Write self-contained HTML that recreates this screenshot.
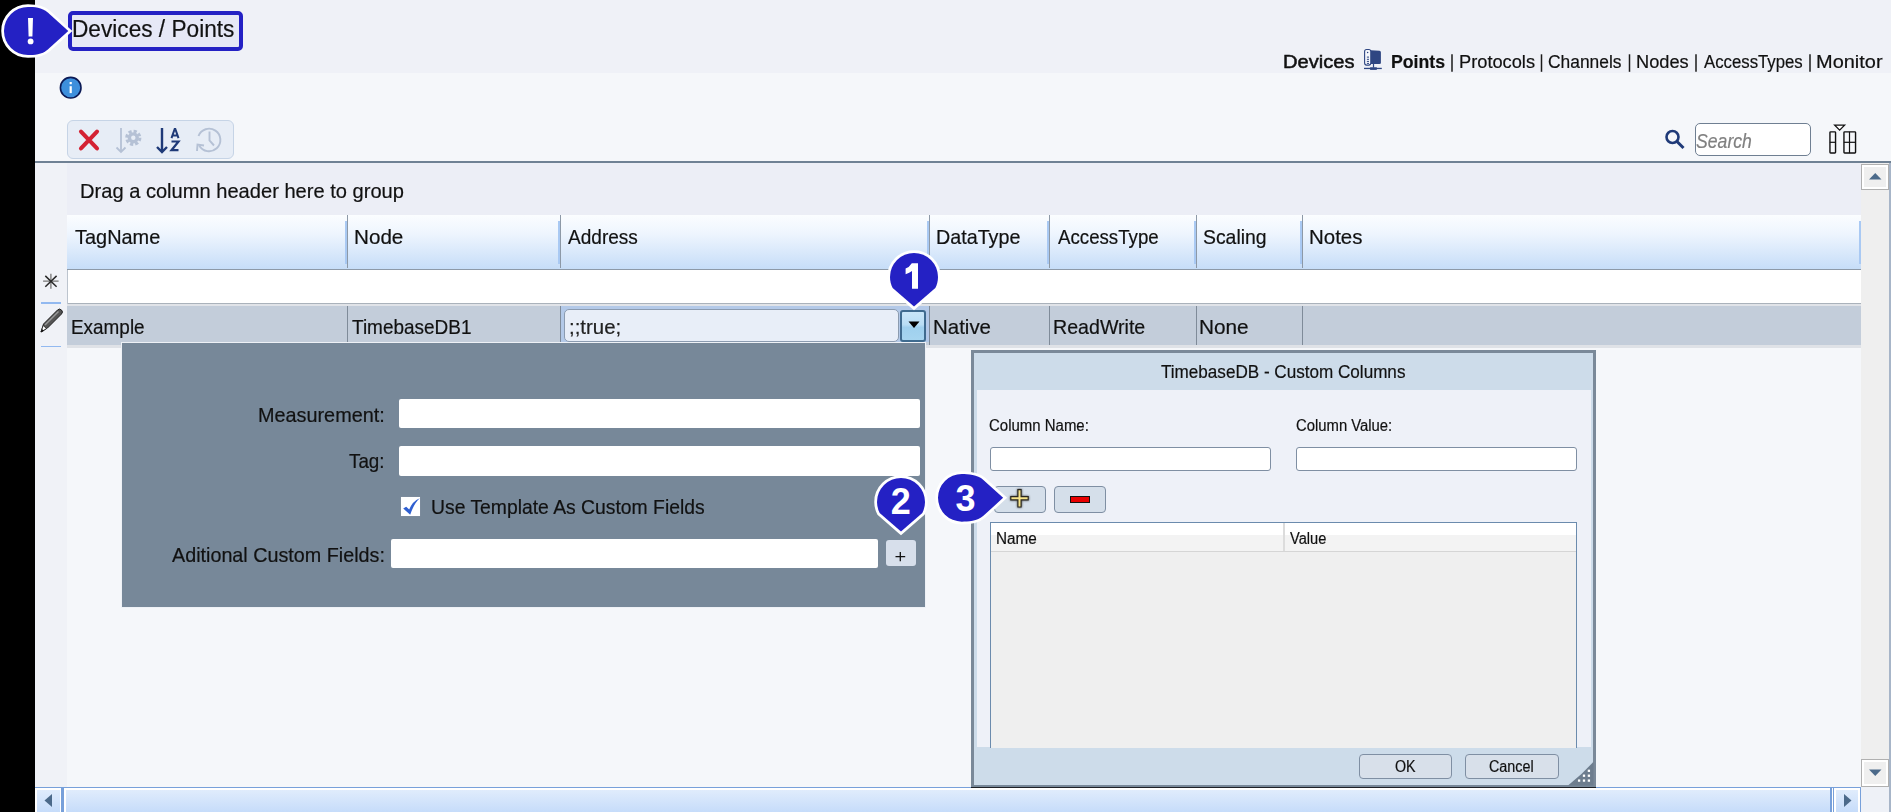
<!DOCTYPE html><html><head><meta charset="utf-8"><style>
html,body{margin:0;padding:0;}
body{width:1891px;height:812px;overflow:hidden;position:relative;background:#f5f7fa;font-family:"Liberation Sans",sans-serif;}
.t{position:absolute;white-space:nowrap;-webkit-text-stroke:0.2px currentColor;}
svg{overflow:visible;}
</style></head><body>
<div style="position:absolute;left:0px;top:0px;width:1891px;height:73px;background:#eff1f7"></div>
<div style="position:absolute;left:0px;top:0px;width:35px;height:812px;background:#000"></div>
<div style="position:absolute;left:68px;top:11px;width:175px;height:40px;box-sizing:border-box;border:4px solid #2421c4;border-radius:5px;background:#e6e8f6"></div>
<div class="t" style="left:72.29px;top:18.33px;font-size:23px;line-height:23px;font-weight:normal;font-style:normal;color:#111;transform:scaleX(0.9848);transform-origin:0 0;">Devices / Points</div>
<div class="t" style="left:1282.89px;top:52.70px;font-size:18.9px;line-height:18.9px;font-weight:normal;font-style:normal;color:#111;transform:scaleX(1.0644);transform-origin:0 0;-webkit-text-stroke:0.5px #111;">Devices</div>
<div class="t" style="left:1390.65px;top:52.70px;font-size:18.9px;line-height:18.9px;font-weight:bold;font-style:normal;color:#111;transform:scaleX(0.9362);transform-origin:0 0;">Points</div>
<div class="t" style="left:1458.54px;top:52.70px;font-size:18.9px;line-height:18.9px;font-weight:normal;font-style:normal;color:#111;transform:scaleX(0.9656);transform-origin:0 0;">Protocols</div>
<div class="t" style="left:1548.13px;top:52.70px;font-size:18.9px;line-height:18.9px;font-weight:normal;font-style:normal;color:#111;transform:scaleX(0.9202);transform-origin:0 0;">Channels</div>
<div class="t" style="left:1636.34px;top:52.70px;font-size:18.9px;line-height:18.9px;font-weight:normal;font-style:normal;color:#111;transform:scaleX(0.9648);transform-origin:0 0;">Nodes</div>
<div class="t" style="left:1704.30px;top:52.70px;font-size:18.9px;line-height:18.9px;font-weight:normal;font-style:normal;color:#111;transform:scaleX(0.8874);transform-origin:0 0;">AccessTypes</div>
<div class="t" style="left:1816.40px;top:52.70px;font-size:18.9px;line-height:18.9px;font-weight:normal;font-style:normal;color:#111;transform:scaleX(1.0566);transform-origin:0 0;">Monitor</div>
<svg style="position:absolute;left:1440px;top:50px;" width="380" height="26" viewBox="0 0 380 26"><line x1="12" y1="4.3" x2="12" y2="21.8" stroke="#1a1a1a" stroke-width="1.5"/><line x1="101.5" y1="4.3" x2="101.5" y2="21.8" stroke="#1a1a1a" stroke-width="1.5"/><line x1="189.5" y1="4.3" x2="189.5" y2="21.8" stroke="#1a1a1a" stroke-width="1.5"/><line x1="256" y1="4.3" x2="256" y2="21.8" stroke="#1a1a1a" stroke-width="1.5"/><line x1="370" y1="4.3" x2="370" y2="21.8" stroke="#1a1a1a" stroke-width="1.5"/></svg>
<svg style="position:absolute;left:1355px;top:44px;" width="30" height="30" viewBox="0 0 30 30"><rect x="9.6" y="5.5" width="6.2" height="15.6" rx="2" fill="#f4f6fb" stroke="#2e4682" stroke-width="1.1"/><path d="M15.8 6.2 L24.5 6.8 Q25.9 7 25.9 8.4 L25.9 19 Q25.9 20.1 24.5 20.1 L15.8 20.1 Z" fill="#2e4682"/><circle cx="12.6" cy="8.5" r="0.75" fill="#2e4682"/><g stroke="#2e4682" stroke-width="1"><line x1="11.9" y1="13.1" x2="14" y2="13.1"/><line x1="11.9" y1="15.3" x2="14" y2="15.3"/><line x1="11.9" y1="17.4" x2="14" y2="17.4"/><line x1="11.9" y1="19.4" x2="14" y2="19.4"/></g><rect x="17.9" y="20" width="1.2" height="3.6" fill="#2e4682"/><rect x="9" y="23.8" width="17.8" height="1.3" fill="#2e4682"/><rect x="15.1" y="23.3" width="6.7" height="2.6" fill="#2e4682"/></svg>
<svg style="position:absolute;left:59px;top:76px;" width="24" height="24" viewBox="0 0 24 24"><circle cx="11.7" cy="11.7" r="10.3" fill="#3d8fdc" stroke="#0b1a55" stroke-width="1.6"/><rect x="10.6" y="10.2" width="2.2" height="6.9" fill="#fff"/><rect x="10.6" y="6" width="2.2" height="2.2" fill="#fff"/></svg>
<div style="position:absolute;left:67px;top:120px;width:167px;height:39px;box-sizing:border-box;border:1px solid #c6d4e6;border-radius:6px;background:#e7edf6"></div>
<svg style="position:absolute;left:75px;top:125px;" width="30" height="30" viewBox="0 0 30 30"><path d="M6 6.6 L22 23.4 M22 6.6 L6 23.4" stroke="#d42233" stroke-width="4.1" stroke-linecap="round"/></svg>
<svg style="position:absolute;left:113px;top:125px;" width="30" height="30" viewBox="0 0 30 30"><path d="M8 3 L8 27 M3.5 22.5 L8 27 L12.5 22.5" stroke="#b5c1d5" stroke-width="1.8" fill="none"/><circle cx="20.3" cy="12.8" r="6.6" fill="none" stroke="#b5c1d5" stroke-width="3" stroke-dasharray="3.2 2"/><circle cx="20.3" cy="12.8" r="5.6" fill="#b5c1d5"/><circle cx="20.3" cy="12.8" r="2.2" fill="#e7edf6"/></svg>
<svg style="position:absolute;left:153px;top:125px;" width="30" height="30" viewBox="0 0 30 30"><path d="M9 3 L9 27 M4 22 L9 27 L14 22" stroke="#1f3a78" stroke-width="2.4" fill="none"/><path d="M18.5 13.2 L21.7 4 L22.3 4 L25.5 13.2 M19.6 10.6 L24.4 10.6" stroke="#1f3a78" stroke-width="2" fill="none"/><path d="M18.5 16.5 L25.5 16.5 L18.5 25.2 L25.5 25.2" stroke="#1f3a78" stroke-width="2.2" fill="none"/></svg>
<svg style="position:absolute;left:194px;top:126px;" width="30" height="30" viewBox="0 0 30 30"><path d="M5.2 19.5 A11.3 11.3 0 1 0 4.5 10" stroke="#b5c1d5" stroke-width="1.9" fill="none"/><path d="M15.5 5.5 L15.5 14.5 L20 19.5" stroke="#b5c1d5" stroke-width="1.9" fill="none"/><path d="M3 25 L3.5 18.5 L10 19.5" stroke="#b5c1d5" stroke-width="1.9" fill="none"/></svg>
<div style="position:absolute;left:35px;top:161px;width:1856px;height:2px;background:#6f8194"></div>
<svg style="position:absolute;left:1660px;top:126px;" width="30" height="30" viewBox="0 0 30 30"><circle cx="12.5" cy="11" r="6" fill="none" stroke="#1f3a78" stroke-width="2.6"/><path d="M17 15.5 L23.5 22" stroke="#1f3a78" stroke-width="3" /></svg>
<div style="position:absolute;left:1695px;top:123px;width:116px;height:33px;box-sizing:border-box;border:1.5px solid #6f7f92;border-radius:5px;background:#fff"></div>
<div class="t" style="left:1695.97px;top:130.97px;font-size:20px;line-height:20px;font-weight:normal;font-style:italic;color:#808080;transform:scaleX(0.8819);transform-origin:0 0;">Search</div>
<svg style="position:absolute;left:1826px;top:123px;" width="34" height="34" viewBox="0 0 34 34"><path d="M8.7 2.2 L18.6 2.2 L13.65 7.2 Z" fill="#fff" stroke="#111" stroke-width="1.3" stroke-linejoin="miter"/><rect x="3.95" y="8.85" width="5.6" height="21.2" rx="0.7" fill="none" stroke="#111" stroke-width="1.4"/><line x1="3.9" y1="19.3" x2="9.6" y2="19.3" stroke="#111" stroke-width="1.2"/><rect x="17.95" y="8.85" width="11.6" height="21.2" rx="0.7" fill="none" stroke="#111" stroke-width="1.4"/><line x1="17.9" y1="19.3" x2="29.6" y2="19.3" stroke="#111" stroke-width="1.2"/><line x1="23.5" y1="8.8" x2="23.5" y2="30.1" stroke="#111" stroke-width="1.2"/></svg>
<div style="position:absolute;left:35px;top:163px;width:32px;height:624px;background:#f0f2f7"></div>
<div style="position:absolute;left:67px;top:163px;width:1794px;height:52px;background:#eceef6"></div>
<div class="t" style="left:80.39px;top:180.72px;font-size:20.3px;line-height:20.3px;font-weight:normal;font-style:normal;color:#111;transform:scaleX(0.9908);transform-origin:0 0;">Drag a column header here to group</div>
<div style="position:absolute;left:67px;top:215px;width:1794px;height:54px;background:linear-gradient(#fbfdff 0%,#eef5fe 35%,#c6ddf8 100%);"></div>
<div style="position:absolute;left:67px;top:268.6px;width:1794px;height:1px;background:#8d99a7"></div>
<div style="position:absolute;left:347px;top:215px;width:1px;height:53px;background:#8d99a7"></div>
<div style="position:absolute;left:345px;top:221px;width:2px;height:43px;background:#a9c9f3"></div>
<div style="position:absolute;left:559.5px;top:215px;width:1px;height:53px;background:#8d99a7"></div>
<div style="position:absolute;left:557.5px;top:221px;width:2px;height:43px;background:#a9c9f3"></div>
<div style="position:absolute;left:929px;top:215px;width:1px;height:53px;background:#8d99a7"></div>
<div style="position:absolute;left:927px;top:221px;width:2px;height:43px;background:#a9c9f3"></div>
<div style="position:absolute;left:1049px;top:215px;width:1px;height:53px;background:#8d99a7"></div>
<div style="position:absolute;left:1047px;top:221px;width:2px;height:43px;background:#a9c9f3"></div>
<div style="position:absolute;left:1196px;top:215px;width:1px;height:53px;background:#8d99a7"></div>
<div style="position:absolute;left:1194px;top:221px;width:2px;height:43px;background:#a9c9f3"></div>
<div style="position:absolute;left:1302px;top:215px;width:1px;height:53px;background:#8d99a7"></div>
<div style="position:absolute;left:1300px;top:221px;width:2px;height:43px;background:#a9c9f3"></div>
<div style="position:absolute;left:1859px;top:221px;width:2px;height:43px;background:#a9c9f3"></div>
<div class="t" style="left:75.00px;top:226.72px;font-size:20.3px;line-height:20.3px;font-weight:normal;font-style:normal;color:#111;transform:scaleX(0.9829);transform-origin:0 0;">TagName</div>
<div class="t" style="left:354.05px;top:226.72px;font-size:20.3px;line-height:20.3px;font-weight:normal;font-style:normal;color:#111;transform:scaleX(1.0178);transform-origin:0 0;">Node</div>
<div class="t" style="left:568.00px;top:226.72px;font-size:20.3px;line-height:20.3px;font-weight:normal;font-style:normal;color:#111;transform:scaleX(0.9391);transform-origin:0 0;">Address</div>
<div class="t" style="left:936.42px;top:226.72px;font-size:20.3px;line-height:20.3px;font-weight:normal;font-style:normal;color:#111;transform:scaleX(0.9722);transform-origin:0 0;">DataType</div>
<div class="t" style="left:1057.50px;top:226.72px;font-size:20.3px;line-height:20.3px;font-weight:normal;font-style:normal;color:#111;transform:scaleX(0.9207);transform-origin:0 0;">AccessType</div>
<div class="t" style="left:1202.63px;top:226.72px;font-size:20.3px;line-height:20.3px;font-weight:normal;font-style:normal;color:#111;transform:scaleX(0.9557);transform-origin:0 0;">Scaling</div>
<div class="t" style="left:1308.86px;top:226.72px;font-size:20.3px;line-height:20.3px;font-weight:normal;font-style:normal;color:#111;transform:scaleX(1.0089);transform-origin:0 0;">Notes</div>
<div style="position:absolute;left:67px;top:269.6px;width:1794px;height:33.4px;background:#fff"></div>
<div style="position:absolute;left:67px;top:303px;width:1794px;height:1px;background:#aab2bb"></div>
<div style="position:absolute;left:67px;top:269.6px;width:1px;height:34px;background:#bcc4ce"></div>
<div style="position:absolute;left:67px;top:304px;width:1794px;height:2px;background:#e0e3e8"></div>
<div style="position:absolute;left:67px;top:306px;width:1794px;height:39px;background:#c3cdda"></div>
<div style="position:absolute;left:67px;top:345px;width:1794px;height:2.5px;background:#dfe2e7"></div>
<div style="position:absolute;left:347px;top:306px;width:1px;height:39px;background:#7f8b99"></div>
<div style="position:absolute;left:560px;top:306px;width:1px;height:39px;background:#7f8b99"></div>
<div style="position:absolute;left:929px;top:306px;width:1px;height:39px;background:#7f8b99"></div>
<div style="position:absolute;left:1049px;top:306px;width:1px;height:39px;background:#7f8b99"></div>
<div style="position:absolute;left:1196px;top:306px;width:1px;height:39px;background:#7f8b99"></div>
<div style="position:absolute;left:1302px;top:306px;width:1px;height:39px;background:#7f8b99"></div>
<div style="position:absolute;left:561px;top:306px;width:368px;height:36px;background:#b3c9e8"></div>
<div style="position:absolute;left:564px;top:309px;width:335px;height:33px;box-sizing:border-box;border:1.5px solid #8b9bb0;border-radius:5px;background:#e8eef8"></div>
<div style="position:absolute;left:900px;top:309.5px;width:26px;height:32px;box-sizing:border-box;border:2px solid #3f6b8f;border-radius:3px;background:linear-gradient(#c9e6f8,#b9def5 45%,#9fd0ee 55%,#a6d5f0)"></div>
<svg style="position:absolute;left:907px;top:320px;" width="14" height="10" viewBox="0 0 14 10"><path d="M1.5 1.5 L12.5 1.5 L7 8 Z" fill="#000"/></svg>
<div class="t" style="left:71.38px;top:316.72px;font-size:20.3px;line-height:20.3px;font-weight:normal;font-style:normal;color:#111;transform:scaleX(0.9329);transform-origin:0 0;">Example</div>
<div class="t" style="left:351.62px;top:316.72px;font-size:20.3px;line-height:20.3px;font-weight:normal;font-style:normal;color:#111;transform:scaleX(0.9354);transform-origin:0 0;">TimebaseDB1</div>
<div class="t" style="left:568.56px;top:316.72px;font-size:20.3px;line-height:20.3px;font-weight:normal;font-style:normal;color:#222;transform:scaleX(1.0059);transform-origin:0 0;">;;true;</div>
<div class="t" style="left:932.86px;top:316.72px;font-size:20.3px;line-height:20.3px;font-weight:normal;font-style:normal;color:#111;transform:scaleX(1.0089);transform-origin:0 0;">Native</div>
<div class="t" style="left:1052.73px;top:316.72px;font-size:20.3px;line-height:20.3px;font-weight:normal;font-style:normal;color:#111;transform:scaleX(0.9669);transform-origin:0 0;">ReadWrite</div>
<div class="t" style="left:1199.14px;top:316.72px;font-size:20.3px;line-height:20.3px;font-weight:normal;font-style:normal;color:#111;transform:scaleX(1.0244);transform-origin:0 0;">None</div>
<svg style="position:absolute;left:41px;top:271px;" width="20" height="20" viewBox="0 0 20 20"><path d="M9.9 2.8 L9.9 17.7 M2.1 10.2 L17.6 10.2" stroke="#777" stroke-width="1.3"/><path d="M4.3 4.9 L15.6 15.7 M4.3 15.7 L15.6 4.9" stroke="#2a2a2a" stroke-width="1.5"/></svg>
<div style="position:absolute;left:41px;top:302px;width:20px;height:2px;background:#92b9f0"></div>
<div style="position:absolute;left:41px;top:346px;width:20px;height:1.2px;background:#92b9f0"></div>
<svg style="position:absolute;left:38px;top:306px;" width="26" height="28" viewBox="0 0 26 28"><path d="M3 26 L5.5 18 L19.5 4 A2.6 2.6 0 0 1 23.5 8 L9.5 22 Z" fill="#555" stroke="#222" stroke-width="1"/><path d="M3 26 L5.2 19.5 L8.5 22.5 Z" fill="#fff" stroke="#222" stroke-width="0.8"/><path d="M2.8 26.2 L4 23 L6 25 Z" fill="#111"/><path d="M7 19 L20.5 5.5" stroke="#999" stroke-width="1.5"/></svg>
<div style="position:absolute;left:121px;top:342.2px;width:805px;height:265.8px;box-sizing:border-box;border:1.8px solid #eef1f6;background:#778899"></div>
<div class="t" style="left:258.21px;top:404.80px;font-size:20.2px;line-height:20.2px;font-weight:normal;font-style:normal;color:#111;transform:scaleX(0.9821);transform-origin:0 0;">Measurement:</div>
<div style="position:absolute;left:398.5px;top:399px;width:521px;height:29px;background:#fff;border-radius:2px"></div>
<div class="t" style="left:349.42px;top:450.70px;font-size:20.2px;line-height:20.2px;font-weight:normal;font-style:normal;color:#111;transform:scaleX(0.9315);transform-origin:0 0;">Tag:</div>
<div style="position:absolute;left:398.5px;top:446px;width:521px;height:29.5px;background:#fff;border-radius:2px"></div>
<div style="position:absolute;left:400.8px;top:496.8px;width:19.4px;height:19.4px;background:#fff;box-shadow:0 0 0.8px #aab"></div>
<svg style="position:absolute;left:400px;top:496px;" width="21" height="21" viewBox="0 0 21 21"><path d="M3.2 12.6 L6.2 10.7 L9.2 13.6 Q12.5 5 19.8 2.2 Q14.2 6.8 10.2 18.8 Z" fill="#2f5fd0"/></svg>
<div class="t" style="left:430.55px;top:497.40px;font-size:20.2px;line-height:20.2px;font-weight:normal;font-style:normal;color:#111;transform:scaleX(0.9577);transform-origin:0 0;">Use Template As Custom Fields</div>
<div class="t" style="left:172.00px;top:544.60px;font-size:20.2px;line-height:20.2px;font-weight:normal;font-style:normal;color:#111;transform:scaleX(0.9781);transform-origin:0 0;">Aditional Custom Fields:</div>
<div style="position:absolute;left:391px;top:539px;width:487px;height:29px;background:#fff;border-radius:2px"></div>
<div style="position:absolute;left:886px;top:540px;width:29.5px;height:26px;background:#d7dfeb;border-radius:3px"></div>
<svg style="position:absolute;left:890px;top:548px;" width="20" height="20" viewBox="0 0 20 20"><path d="M5.5 8.6 L15.2 8.6 M10.3 4 L10.3 13.3" stroke="#111" stroke-width="1.3"/></svg>
<div style="position:absolute;left:971px;top:350px;width:625px;height:437.2px;box-sizing:border-box;border:3px solid #7a8999;border-bottom:2.2px solid #778899;background:#cddcea"></div>
<div class="t" style="left:1160.96px;top:362.70px;font-size:18.9px;line-height:18.9px;font-weight:normal;font-style:normal;color:#111;transform:scaleX(0.9048);transform-origin:0 0;">TimebaseDB - Custom Columns</div>
<div style="position:absolute;left:977px;top:390px;width:613.5px;height:357px;background:#eef1f8"></div>
<div class="t" style="left:989.45px;top:417.86px;font-size:16px;line-height:16px;font-weight:normal;font-style:normal;color:#111;transform:scaleX(0.9358);transform-origin:0 0;">Column Name:</div>
<div class="t" style="left:1295.76px;top:417.86px;font-size:16px;line-height:16px;font-weight:normal;font-style:normal;color:#111;transform:scaleX(0.9276);transform-origin:0 0;">Column Value:</div>
<div style="position:absolute;left:990px;top:446.5px;width:281px;height:24.5px;box-sizing:border-box;border:1px solid #7f8fa3;border-radius:3px;background:#fff"></div>
<div style="position:absolute;left:1296px;top:446.5px;width:281px;height:24.5px;box-sizing:border-box;border:1px solid #7f8fa3;border-radius:3px;background:#fff"></div>
<div style="position:absolute;left:994px;top:486px;width:52px;height:27px;box-sizing:border-box;border:1px solid #7f8fa3;border-radius:4px;background:#d5dfea"></div>
<div style="position:absolute;left:1053.5px;top:486px;width:52.5px;height:27px;box-sizing:border-box;border:1px solid #7f8fa3;border-radius:4px;background:#d5dfea"></div>
<svg style="position:absolute;left:1008px;top:487px;" width="24" height="24" viewBox="0 0 24 24"><path d="M9.9 2.6 H13.1 V9.7 H20.2 V12.9 H13.1 V20 H9.9 V12.9 H2.8 V9.7 H9.9 Z" fill="#f7e48a" stroke="#2a2720" stroke-width="1.2" style="filter:drop-shadow(0.3px 0.8px 0.9px rgba(0,0,0,.7))"/></svg>
<div style="position:absolute;left:1069.8px;top:495.6px;width:20.2px;height:7.4px;box-sizing:border-box;border:1.1px solid #111;background:#e80000"></div>
<div style="position:absolute;left:990px;top:521.5px;width:587px;height:226px;box-sizing:border-box;border:1px solid #6b8bad;border-bottom:none;background:#efefef"></div>
<div style="position:absolute;left:991px;top:522.5px;width:585px;height:12px;background:#fff"></div>
<div style="position:absolute;left:991px;top:534.5px;width:585px;height:16px;background:#f3f3f3"></div>
<div style="position:absolute;left:991px;top:550.5px;width:585px;height:1px;background:#d5d5d5"></div>
<div style="position:absolute;left:1283px;top:523px;width:2px;height:28px;background:#dcdcdc"></div>
<div class="t" style="left:996.48px;top:530.96px;font-size:16px;line-height:16px;font-weight:normal;font-style:normal;color:#111;transform:scaleX(0.9547);transform-origin:0 0;">Name</div>
<div class="t" style="left:1290.43px;top:530.96px;font-size:16px;line-height:16px;font-weight:normal;font-style:normal;color:#111;transform:scaleX(0.9131);transform-origin:0 0;">Value</div>
<div style="position:absolute;left:1358.5px;top:754px;width:93.5px;height:25px;box-sizing:border-box;border:1px solid #7f8fa3;border-radius:4px;background:#d8e0ea"></div>
<div style="position:absolute;left:1465px;top:754px;width:93.5px;height:25px;box-sizing:border-box;border:1px solid #7f8fa3;border-radius:4px;background:#d8e0ea"></div>
<div class="t" style="left:1395.06px;top:758.96px;font-size:16px;line-height:16px;font-weight:normal;font-style:normal;color:#111;transform:scaleX(0.8903);transform-origin:0 0;">OK</div>
<div class="t" style="left:1489.28px;top:758.96px;font-size:16px;line-height:16px;font-weight:normal;font-style:normal;color:#111;transform:scaleX(0.8973);transform-origin:0 0;">Cancel</div>
<svg style="position:absolute;left:1568px;top:761px;" width="26" height="25" viewBox="0 0 26 25"><path d="M0 24.5 Q14 13.5 25.5 0.8 L25.5 24.5 Z" fill="#6d7d8e"/><g fill="#fff"><rect x="19.75" y="8.65" width="2.3" height="2.3"/><rect x="14.85" y="13.55" width="2.3" height="2.3"/><rect x="19.75" y="13.55" width="2.3" height="2.3"/><rect x="9.95" y="18.45" width="2.3" height="2.3"/><rect x="14.85" y="18.45" width="2.3" height="2.3"/><rect x="19.75" y="18.45" width="2.3" height="2.3"/></g></svg>
<div style="position:absolute;left:1861px;top:163px;width:28px;height:624px;background:#efefef"></div>
<div style="position:absolute;left:1889px;top:163px;width:2px;height:649px;background:#a7b5c8"></div>
<div style="position:absolute;left:1861px;top:163.5px;width:27.7px;height:26.5px;box-sizing:border-box;border:1.6px solid #b0b0b0;box-shadow:inset 0 0 0 2px #fff;background:#efefef"></div>
<svg style="position:absolute;left:1868px;top:171px;" width="15" height="10" viewBox="0 0 15 10"><path d="M1 8.5 L13.5 8.5 L7.25 2 Z" fill="#4c6a8a"/></svg>
<div style="position:absolute;left:1861px;top:759.3px;width:27.7px;height:27.3px;box-sizing:border-box;border:1.6px solid #b0b0b0;box-shadow:inset 0 0 0 2px #fff;background:#efefef"></div>
<svg style="position:absolute;left:1868px;top:768px;" width="15" height="10" viewBox="0 0 15 10"><path d="M1 1.5 L13.5 1.5 L7.25 8 Z" fill="#4c6a8a"/></svg>
<div style="position:absolute;left:35px;top:787px;width:1826px;height:25px;background:#fff"></div>
<div style="position:absolute;left:35px;top:787px;width:1826px;height:1px;background:#77a0da"></div>
<div style="position:absolute;left:37px;top:790px;width:22.5px;height:22px;background:linear-gradient(#e0ecfc,#c6dcfa)"></div>
<div style="position:absolute;left:61.3px;top:788px;width:2.4px;height:24px;background:#77a0da"></div>
<div style="position:absolute;left:66px;top:790px;width:1763.5px;height:22px;background:linear-gradient(#e0ecfc,#c6dcfa)"></div>
<div style="position:absolute;left:1830.3px;top:788px;width:1.3px;height:24px;background:#77a0da"></div>
<div style="position:absolute;left:1833.3px;top:788px;width:1px;height:24px;background:#77a0da"></div>
<div style="position:absolute;left:1860px;top:788px;width:1px;height:24px;background:#77a0da"></div>
<div style="position:absolute;left:1836px;top:790px;width:22px;height:22px;background:linear-gradient(#e0ecfc,#c6dcfa)"></div>
<svg style="position:absolute;left:42px;top:793px;" width="14" height="16" viewBox="0 0 14 16"><path d="M10 1 L10 14 L2.5 7.5 Z" fill="#4c6a8a"/></svg>
<svg style="position:absolute;left:1840px;top:793px;" width="14" height="16" viewBox="0 0 14 16"><path d="M4 1 L4 14 L11.5 7.5 Z" fill="#4c6a8a"/></svg>
<div style="position:absolute;left:1861px;top:787px;width:28px;height:25px;background:#eef1f7"></div>
<div style="position:absolute;left:971px;top:787px;width:625px;height:1.2px;background:#1e2127"></div>
<svg style="position:absolute;left:-2.50px;top:1.00px;" width="76.30" height="60.00" viewBox="0 0 76.30 60.00"><path d="M70.30 30.00 L49.80 11.60 C43.85 6.26 36.00 6.00 30.00 6.00 A24 24 0 0 0 6.00 30.00 A24 24 0 0 0 30.00 54.00 C36.00 54.00 43.85 53.74 49.80 48.40 Z" fill="#2421c4" stroke="#fff" stroke-width="5.5" stroke-linejoin="miter" stroke-miterlimit="4" paint-order="stroke"/></svg>
<svg style="position:absolute;left:20px;top:12px;" width="20" height="40" viewBox="0 0 20 40"><path d="M8 6 L13 6 L12.4 24.6 L8.6 24.6 Z" fill="#fff"/><circle cx="10.6" cy="29.4" r="2.9" fill="#fff"/></svg>
<svg style="position:absolute;left:884.00px;top:247.00px;" width="60.00" height="65.60" viewBox="0 0 60.00 65.60"><path d="M30.00 59.60 L8.67 41.00 C6.92 37.60 6.00 33.83 6.00 30.00 A24 24 0 0 1 30.00 6.00 A24 24 0 0 1 54.00 30.00 C54.00 33.83 53.08 37.60 51.33 41.00 Z" fill="#2421c4" stroke="#fff" stroke-width="5.5" stroke-linejoin="miter" stroke-miterlimit="4" paint-order="stroke"/></svg>
<svg style="position:absolute;left:900px;top:258px;" width="28" height="34" viewBox="0 0 28 34"><path d="M11.8 5.2 L18 5.2 L18 30.8 L12 30.8 L12 13 Q9.5 15 5.6 16.2 L5.6 10.6 Q9.5 9 11.8 5.2 Z" fill="#fff"/></svg>
<svg style="position:absolute;left:871.25px;top:472.15px;" width="60.00" height="65.60" viewBox="0 0 60.00 65.60"><path d="M30.00 59.60 L8.67 41.00 C6.92 37.60 6.00 33.83 6.00 30.00 A24 24 0 0 1 30.00 6.00 A24 24 0 0 1 54.00 30.00 C54.00 33.83 53.08 37.60 51.33 41.00 Z" fill="#2421c4" stroke="#fff" stroke-width="5.5" stroke-linejoin="miter" stroke-miterlimit="4" paint-order="stroke"/></svg>
<div class="t" style="left:890.74px;top:483.93px;font-size:36px;line-height:36px;font-weight:bold;font-style:normal;color:#fff;-webkit-text-stroke:0;">2</div>
<svg style="position:absolute;left:931.80px;top:467.90px;" width="77.15" height="59.70" viewBox="0 0 77.15 59.70"><path d="M71.15 29.85 L51.40 11.90 C45.48 6.52 35.85 6.00 29.85 6.00 A23.85 23.85 0 0 0 6.00 29.85 A23.85 23.85 0 0 0 29.85 53.70 C35.85 53.70 45.48 53.18 51.40 47.80 Z" fill="#2421c4" stroke="#fff" stroke-width="5.5" stroke-linejoin="miter" stroke-miterlimit="4" paint-order="stroke"/></svg>
<div class="t" style="left:955.40px;top:481.33px;font-size:36px;line-height:36px;font-weight:bold;font-style:normal;color:#fff;-webkit-text-stroke:0;">3</div>
</body></html>
